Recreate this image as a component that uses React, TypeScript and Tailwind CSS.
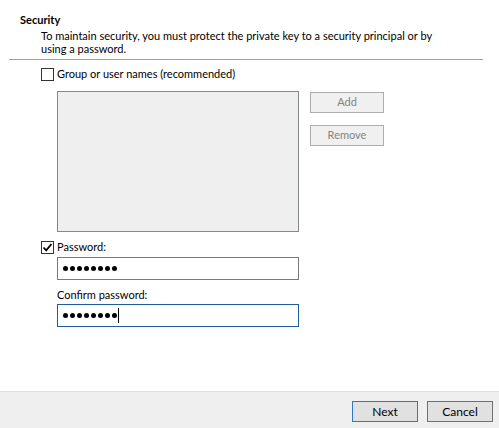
const font = { fontFamily: 'Lato, "Noto Sans", sans-serif' };

const Checkbox = ({ checked }: { checked?: boolean }) => (
  <span className="flex h-[13px] w-[13px] items-center justify-center border border-[#333333] bg-white">
    {checked && (
      <svg width="11" height="11" viewBox="0 0 11 11">
        <path d="M1.5 5.5 L4.2 8.3 L9.5 2" fill="none" stroke="#000" strokeWidth="1.8" />
      </svg>
    )}
  </span>
);

const Dots = () => (
  <span className="flex gap-[2px]">
    {Array.from({ length: 8 }).map((_, i) => (
      <span key={i} className="h-[5px] w-[5px] rounded-full bg-black" />
    ))}
  </span>
);

export default function App() {
  return (
    <div className="flex h-[428px] w-[499px] flex-col bg-white text-[11px] text-black" style={font}>
      <div className="flex-1">
        <div className="pl-[20px] pt-[12px] font-bold leading-[16px]">Security</div>
        <div className="whitespace-nowrap pl-[41px] pt-px leading-[13px]">
          To maintain security, you must protect the private key to a security principal or by
          <br />
          using a password.
        </div>
        <div className="ml-[9px] mr-[16px] mt-[4px] h-px bg-[#a0a0a0]" />

        <div className="ml-[41px] mt-[7px] flex items-center gap-[3px]">
          <Checkbox />
          <span className="leading-[14px]">Group or user names (recommended)</span>
        </div>

        <div className="ml-[57px] mt-[10px] flex gap-[11px]">
          <div className="h-[141px] w-[242px] border border-[#828790] bg-[#efefef]" />
          <div className="flex flex-col gap-[12px] pt-px">
            <button className="h-[21px] w-[74px] border border-[#adadad] bg-[#f0f0f0] text-[#838383]">Add</button>
            <button className="h-[21px] w-[74px] border border-[#adadad] bg-[#f0f0f0] text-[#838383]">Remove</button>
          </div>
        </div>

        <div className="ml-[41px] mt-[8px] flex items-center gap-[3px]">
          <Checkbox checked />
          <span className="leading-[14px]">Password:</span>
        </div>
        <div className="ml-[57px] mt-[3px] flex h-[23px] w-[242px] items-center border border-[#7a7a7a] pl-[5px]">
          <Dots />
        </div>
        <div className="ml-[57px] mt-[8px] leading-[14px]">Confirm password:</div>
        <div className="ml-[57px] mt-[2px] flex h-[23px] w-[242px] items-center border border-[#1e5f9b] pl-[5px]">
          <Dots />
          <span className="ml-px h-[15px] w-px bg-black" />
        </div>
      </div>

      <div className="flex h-[37px] items-start justify-end gap-[9px] border-t border-[#dfdfdf] bg-[#efefef] pr-[6px] pt-[9px]">
        <button className="h-[21px] w-[66px] border border-[#2f79c4] bg-[#e1e1e1] text-[12px]">Next</button>
        <button className="h-[21px] w-[66px] border border-[#707070] bg-[#e1e1e1] text-[12px]">Cancel</button>
      </div>
    </div>
  );
}
